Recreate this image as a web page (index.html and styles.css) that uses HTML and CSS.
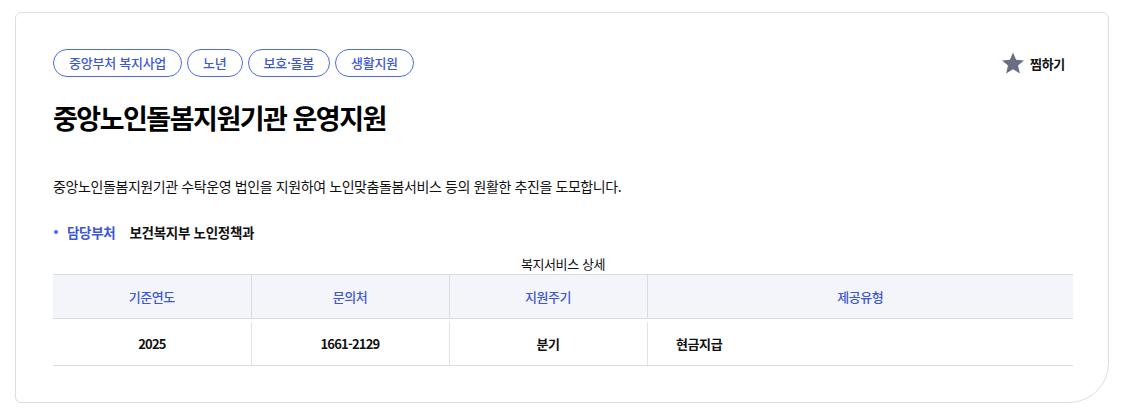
FILE: index.html
```html
<!DOCTYPE html>
<html lang="ko">
<head>
<meta charset="utf-8">
<title>중앙노인돌봄지원기관 운영지원</title>
<link rel="stylesheet" href="styles.css">
</head>
<body>
<section class="card">
  <div class="top">
    <ul class="tags">
      <li class="tag">중앙부처 복지사업</li>
      <li class="tag">노년</li>
      <li class="tag">보호·돌봄</li>
      <li class="tag">생활지원</li>
    </ul>
    <button class="fav" type="button">
      <svg class="star" viewBox="0 0 24 22" width="24" height="22" aria-hidden="true">
        <path d="M12 0.5l3.1 7.3 7.9 0.6-6 5.2 1.9 7.8L12 17.2l-6.9 4.2 1.9-7.8-6-5.2 7.9-0.6z" fill="#6b6d85"/>
      </svg>
      <span>찜하기</span>
    </button>
  </div>
  <h1 class="title">중앙노인돌봄지원기관 운영지원</h1>
  <p class="desc">중앙노인돌봄지원기관 수탁운영 법인을 지원하여 노인맞춤돌봄서비스 등의 원활한 추진을 도모합니다.</p>
  <dl class="dept">
    <dt>담당부처</dt>
    <dd>보건복지부 노인정책과</dd>
  </dl>
  <table class="detail">
    <caption>복지서비스 상세</caption>
    <thead>
      <tr>
        <th class="c1">기준연도</th>
        <th class="c2">문의처</th>
        <th class="c3">지원주기</th>
        <th class="c4">제공유형</th>
      </tr>
    </thead>
    <tbody>
      <tr>
        <td class="num">2025</td>
        <td class="num">1661-2129</td>
        <td>분기</td>
        <td class="left">현금지급</td>
      </tr>
    </tbody>
  </table>
</section>
</body>
</html>
```
FILE: styles.css
```css
* { box-sizing: border-box; }
html, body { margin: 0; padding: 0; background: #fff; }
body {
  font-family: "Noto Sans CJK KR", "Noto Sans", sans-serif;
  color: #111;
  padding: 12px 17px 11px 15px;
}
.card {
  width: 1094px;
  height: 391px;
  border: 1px solid #dedede;
  border-radius: 6px 6px 40px 6px;
  padding: 36px 36px 0 37px;
}
.top {
  display: flex;
  justify-content: space-between;
  align-items: flex-start;
}
.tags {
  display: flex;
  gap: 5px;
  list-style: none;
  margin: 0;
  padding: 0;
}
.tag {
  height: 28px;
  padding: 0 15px;
  border: 1px solid #4d6ce6;
  border-radius: 14px;
  color: #3d57d6;
  font-size: 13px;
  font-weight: 500;
  line-height: 26px;
  letter-spacing: -0.25px;
  white-space: nowrap;
}
.fav {
  display: flex;
  align-items: center;
  gap: 5px;
  margin: 3px 7px 0 0;
  padding: 0;
  border: 0;
  background: none;
  font-family: inherit;
  font-size: 13px;
  font-weight: 700;
  color: #111;
  letter-spacing: -0.3px;
}
.title {
  margin: 21px 0 0;
  font-size: 27px;
  line-height: 40px;
  font-weight: 700;
  letter-spacing: -1.5px;
  color: #000;
}
.desc {
  margin: 38px 0 0;
  font-size: 14px;
  line-height: 20px;
  letter-spacing: -0.4px;
  color: #111;
}
.dept {
  display: flex;
  align-items: center;
  margin: 26px 0 0;
  font-size: 13.5px;
  line-height: 20px;
  letter-spacing: -0.3px;
}
.dept dt {
  position: relative;
  padding-left: 14px;
  color: #3d57d6;
  font-weight: 700;
  margin-right: 14px;
}
.dept dt::before {
  content: "";
  position: absolute;
  left: 1px;
  top: 8px;
  width: 4px;
  height: 4px;
  border-radius: 50%;
  background: #4d6ce6;
}
.dept dd {
  margin: 0;
  font-weight: 700;
  color: #111;
}
.detail {
  width: 1020px;
  margin-top: 12px;
  border-collapse: collapse;
  table-layout: fixed;
  font-size: 13px;
  letter-spacing: -0.4px;
}
.detail caption {
  caption-side: top;
  font-size: 13px;
  line-height: 20px;
  color: #111;
  text-align: center;
  padding-bottom: 0;
}
.detail thead th {
  height: 44px;
  background: #f4f5fa;
  border-top: 1px solid #dcdcdc;
  border-bottom: 1px solid #dcdcdc;
  color: #3d57d6;
  font-weight: 500;
  text-align: center;
  padding: 0;
}
.detail thead th + th { border-left: 1px solid #dcdcdc; }
.c1, .c2, .c3 { width: 198px; }
.detail tbody td {
  position: relative;
  height: 47px;
  border-bottom: 1px solid #dcdcdc;
  text-align: center;
  font-weight: 700;
  color: #111;
  padding: 2px 0 0;
}
.detail tbody td + td::before {
  content: "";
  position: absolute;
  left: 0;
  top: 3px;
  bottom: 0;
  width: 1px;
  background: #e2e2e2;
}
.detail tbody td.num { letter-spacing: -0.8px; }
.detail tbody td.left { text-align: left; padding-left: 29px; }
```
